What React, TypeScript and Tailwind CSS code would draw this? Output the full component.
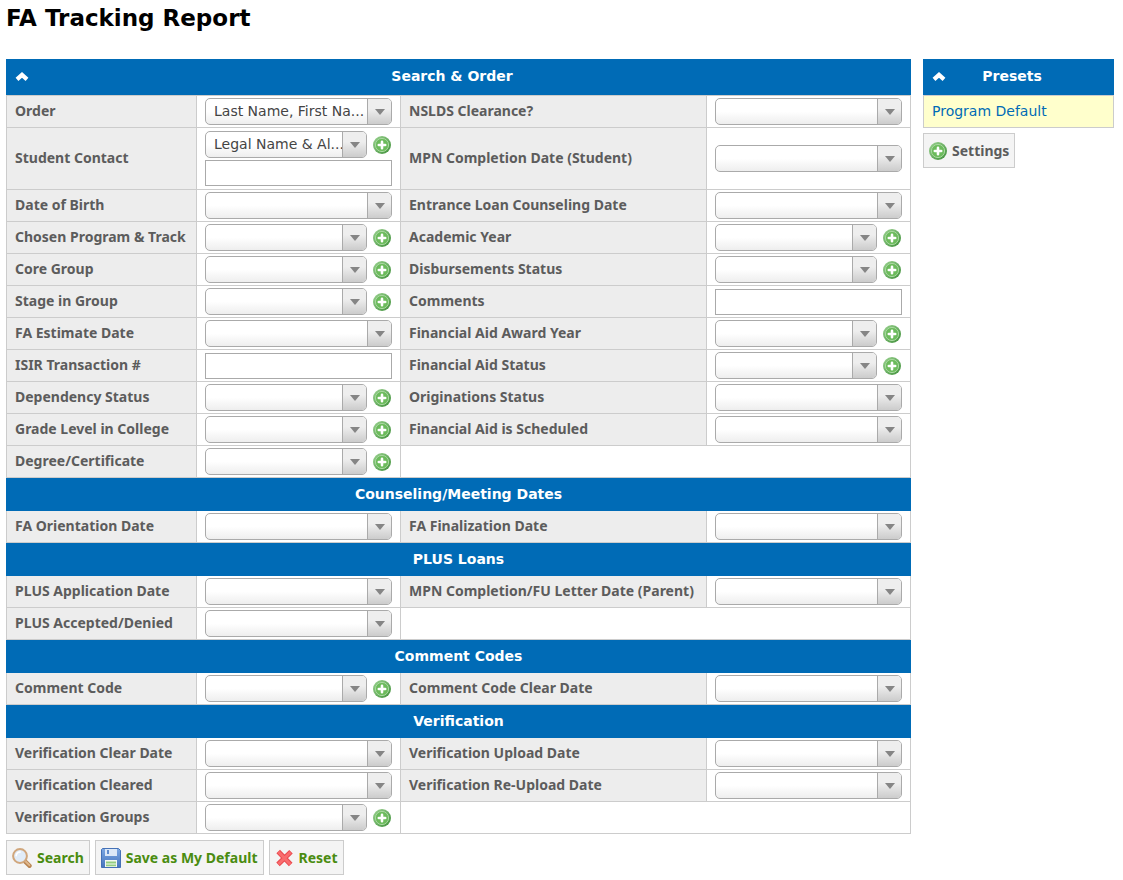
import { useState } from 'react';

type Kind = 'select' | 'multi' | 'text' | 'contact';

type Field = {
    label: string;
    kind: Kind;
    value?: string;
};

type Section = {
    title?: string;
    rows: [Field, Field?][];
};

const sections: Section[] = [
    {
        rows: [
            [{ label: 'Order', kind: 'select', value: 'Last Name, First Na...' }, { label: 'NSLDS Clearance?', kind: 'select' }],
            [{ label: 'Student Contact', kind: 'contact', value: 'Legal Name & Al...' }, { label: 'MPN Completion Date (Student)', kind: 'select' }],
            [{ label: 'Date of Birth', kind: 'select' }, { label: 'Entrance Loan Counseling Date', kind: 'select' }],
            [{ label: 'Chosen Program & Track', kind: 'multi' }, { label: 'Academic Year', kind: 'multi' }],
            [{ label: 'Core Group', kind: 'multi' }, { label: 'Disbursements Status', kind: 'multi' }],
            [{ label: 'Stage in Group', kind: 'multi' }, { label: 'Comments', kind: 'text' }],
            [{ label: 'FA Estimate Date', kind: 'select' }, { label: 'Financial Aid Award Year', kind: 'multi' }],
            [{ label: 'ISIR Transaction #', kind: 'text' }, { label: 'Financial Aid Status', kind: 'multi' }],
            [{ label: 'Dependency Status', kind: 'multi' }, { label: 'Originations Status', kind: 'select' }],
            [{ label: 'Grade Level in College', kind: 'multi' }, { label: 'Financial Aid is Scheduled', kind: 'select' }],
            [{ label: 'Degree/Certificate', kind: 'multi' }],
        ],
    },
    {
        title: 'Counseling/Meeting Dates',
        rows: [[{ label: 'FA Orientation Date', kind: 'select' }, { label: 'FA Finalization Date', kind: 'select' }]],
    },
    {
        title: 'PLUS Loans',
        rows: [
            [{ label: 'PLUS Application Date', kind: 'select' }, { label: 'MPN Completion/FU Letter Date (Parent)', kind: 'select' }],
            [{ label: 'PLUS Accepted/Denied', kind: 'select' }],
        ],
    },
    {
        title: 'Comment Codes',
        rows: [[{ label: 'Comment Code', kind: 'multi' }, { label: 'Comment Code Clear Date', kind: 'select' }]],
    },
    {
        title: 'Verification',
        rows: [
            [{ label: 'Verification Clear Date', kind: 'select' }, { label: 'Verification Upload Date', kind: 'select' }],
            [{ label: 'Verification Cleared', kind: 'select' }, { label: 'Verification Re-Upload Date', kind: 'select' }],
            [{ label: 'Verification Groups', kind: 'multi' }],
        ],
    },
];

const toId = (label: string) => label.toLowerCase().replace(/[^a-z0-9]+/g, '-');

function ChevronIcon({ open }: { open: boolean }) {
    return (
        <svg width="14" height="10" viewBox="0 0 14 10" className={open ? '' : 'rotate-180'} aria-hidden="true">
            <path d="M2 7.400 7 2.900l5 4.500" fill="none" stroke="#fff" strokeWidth="4.200" />
        </svg>
    );
}

function PlusIcon() {
    return (
        <svg width="18" height="18" viewBox="0 0 18 18" aria-hidden="true">
            <defs>
                <linearGradient id="plus-fill" x1="0" y1="0" x2="1" y2="1">
                    <stop offset="0" stopColor="#9bd390" />
                    <stop offset="1" stopColor="#3f8f3a" />
                </linearGradient>
            </defs>
            <circle cx="9" cy="9" r="9" fill="url(#plus-fill)" />
            <circle cx="9" cy="9" r="6.600" fill="#6cbb5c" stroke="#a9d9a0" strokeWidth="1" />
            <path d="M9 5.800v6.400M5.800 9h6.400" stroke="#fff" strokeWidth="2.600" strokeLinecap="round" />
        </svg>
    );
}

function SearchIcon() {
    return (
        <svg width="20" height="20" viewBox="0 0 20 20" aria-hidden="true">
            <path d="m13 13.400 4.500 4.400" stroke="#b98552" strokeWidth="4.400" strokeLinecap="round" />
            <path d="m13.400 13.200 4 3.900" stroke="#e0b88d" strokeWidth="2" strokeLinecap="round" />
            <circle cx="8" cy="8" r="6.900" fill="#e1ecf8" stroke="#d0a67c" strokeWidth="2" />
            <path d="M4.200 7.600A4.200 4.200 0 0 1 8.200 4" fill="none" stroke="#fff" strokeWidth="1.600" strokeLinecap="round" />
        </svg>
    );
}

function SaveIcon() {
    return (
        <svg width="20" height="20" viewBox="0 0 20 20" aria-hidden="true">
            <defs>
                <linearGradient id="disk-fill" x1="0" y1="0" x2="0" y2="1">
                    <stop offset="0" stopColor="#7ba7e3" />
                    <stop offset="1" stopColor="#4775bd" />
                </linearGradient>
            </defs>
            <path d="M1.500.5h16l2 2v17H.5v-18z" fill="url(#disk-fill)" stroke="#4571b6" />
            <path d="M4 1h12v7H4z" fill="#dce8f7" />
            <path d="M6 2h2v4H6z" fill="#5f8bcd" />
            <path d="M4 12h12v7H4z" fill="#f4f8f2" />
            <path d="M5 14.500h10M5 17.300h10" stroke="#93cd80" strokeWidth="1.800" />
        </svg>
    );
}

function ResetIcon() {
    return (
        <svg width="19" height="18" viewBox="0 0 19 18" aria-hidden="true">
            <path d="m3.200 2.600 12.500 13M16 2.800 3 15.400" stroke="#ea4b50" strokeWidth="5" />
            <path d="m3.600 3 11.700 12.200M15.500 3.200 3.500 15" stroke="#f96c6e" strokeWidth="3" />
        </svg>
    );
}

function SelectBox({ id, value = '', narrow = false }: { id: string; value?: string; narrow?: boolean }) {
    return (
        <div className={`relative h-[27px] ${narrow ? 'w-[162px]' : 'w-[187px]'}`}>
            <select
                id={id}
                defaultValue={value}
                className="block h-full w-full appearance-none rounded-[5px] border border-[#aaa] bg-linear-to-b from-white from-50% to-[#eee] pb-[2px] pl-2 text-sm text-[#444]"
            >
                <option value={value}>{value}</option>
            </select>
            <span className="pointer-events-none absolute inset-y-px right-px flex w-6 items-center justify-center rounded-r-[4px] border-l border-[#aaa] bg-linear-to-b from-[#eee] from-40% to-[#ccc]">
                <svg width="10" height="6" viewBox="0 0 10 6" aria-hidden="true">
                    <path d="M0 0h10L5 6z" fill="#858585" />
                </svg>
            </span>
        </div>
    );
}

function TextBox({ id, label }: { id: string; label?: string }) {
    return <input id={id} type="text" aria-label={label} className="block h-[26px] w-[187px] border border-[#aaa] bg-white px-2 text-sm text-[#444]" />;
}

function AddButton({ label }: { label: string }) {
    return (
        <button type="button" aria-label={`Add ${label}`} className="cursor-pointer">
            <PlusIcon />
        </button>
    );
}

function Control({ field }: { field: Field }) {
    const id = toId(field.label);

    if (field.kind === 'text') return <TextBox id={id} />;
    if (field.kind === 'select') return <SelectBox id={id} value={field.value} />;

    return (
        <div className="flex flex-col gap-[2px]">
            <div className="flex items-center gap-[6px]">
                <SelectBox id={id} value={field.value} narrow />
                <AddButton label={field.label} />
            </div>
            {field.kind === 'contact' && <TextBox id={`${id}-text`} label={`${field.label} text`} />}
        </div>
    );
}

function FieldCells({ field }: { field: Field }) {
    return (
        <>
            <th scope="row" className='border border-[#ccc] bg-[#ededed] px-2 pt-0 pb-[2px] text-left font-["Noto_Sans",sans-serif] text-sm font-bold whitespace-nowrap text-[#5c5c5c]'>
                <label htmlFor={toId(field.label)}>{field.label}</label>
            </th>
            <td className="border border-[#ccc] px-2 py-0">
                <Control field={field} />
            </td>
        </>
    );
}

function PanelHeader({ title, open, onToggle }: { title: string; open: boolean; onToggle: () => void }) {
    return (
        <div className="grid h-9 grid-cols-[14px_1fr_27px] items-center bg-[#006bb6] px-[9px] text-white">
            <button type="button" onClick={onToggle} aria-expanded={open} aria-label={`Toggle ${title}`} className="cursor-pointer">
                <ChevronIcon open={open} />
            </button>
            <h2 className="pb-[2px] text-center text-sm font-bold">{title}</h2>
        </div>
    );
}

const buttonClass = 'flex h-[35px] cursor-pointer items-center gap-[5px] border border-[#ccc] bg-[#f4f4f4] px-[5px] font-["Noto_Sans",sans-serif] text-sm font-bold';

export default function App() {
    const [searchOpen, setSearchOpen] = useState(true);
    const [presetsOpen, setPresetsOpen] = useState(true);

    return (
        <div className='min-h-screen bg-white pt-[2px] pr-[9px] pb-[5px] pl-[6px] font-["DejaVu_Sans",Verdana,sans-serif]'>
            <h1 className="mb-[25px] text-[23px] leading-8 font-bold text-black">FA Tracking Report</h1>
            <div className="flex items-start gap-3">
                <form className="min-w-0 flex-1" onSubmit={(e) => e.preventDefault()}>
                    <PanelHeader title="Search & Order" open={searchOpen} onToggle={() => setSearchOpen(!searchOpen)} />
                    {searchOpen && (
                        <table className="w-full table-fixed border-collapse">
                            <colgroup>
                                <col className="w-[190px]" />
                                <col className="w-[204px]" />
                                <col className="w-[306px]" />
                                <col />
                            </colgroup>
                            {sections.map((section, i) => (
                                <tbody key={i}>
                                    {section.title && (
                                        <tr className="h-[33px]">
                                            <th colSpan={4} scope="colgroup" className="border border-[#006bb6] bg-[#006bb6] p-0 text-center text-sm font-bold text-white">
                                                {section.title}
                                            </th>
                                        </tr>
                                    )}
                                    {section.rows.map(([left, right]) => (
                                        <tr key={left.label} className={left.kind === 'contact' ? 'h-[62px]' : 'h-8'}>
                                            <FieldCells field={left} />
                                            {right ? <FieldCells field={right} /> : <td colSpan={2} className="border border-[#ccc]" />}
                                        </tr>
                                    ))}
                                </tbody>
                            ))}
                        </table>
                    )}
                    <div className="mt-[6px] flex gap-[5px] text-[#4a8c10]">
                        <button type="submit" className={buttonClass}>
                            <SearchIcon />
                            Search
                        </button>
                        <button type="button" className={buttonClass}>
                            <SaveIcon />
                            Save as My Default
                        </button>
                        <button type="reset" className={buttonClass}>
                            <ResetIcon />
                            Reset
                        </button>
                    </div>
                </form>

                <aside className="w-[191px] shrink-0">
                    <PanelHeader title="Presets" open={presetsOpen} onToggle={() => setPresetsOpen(!presetsOpen)} />
                    {presetsOpen && (
                        <div className="flex h-[33px] items-center border border-[#ccc] bg-[#ffffcc] px-2 pb-[2px] text-sm">
                            <a href="#program-default" className="text-[#006bb6]">Program Default</a>
                        </div>
                    )}
                    <button type="button" className={`${buttonClass} mt-[5px] text-[#5c5c5c]`}>
                        <PlusIcon />
                        Settings
                    </button>
                </aside>
            </div>
        </div>
    );
}
